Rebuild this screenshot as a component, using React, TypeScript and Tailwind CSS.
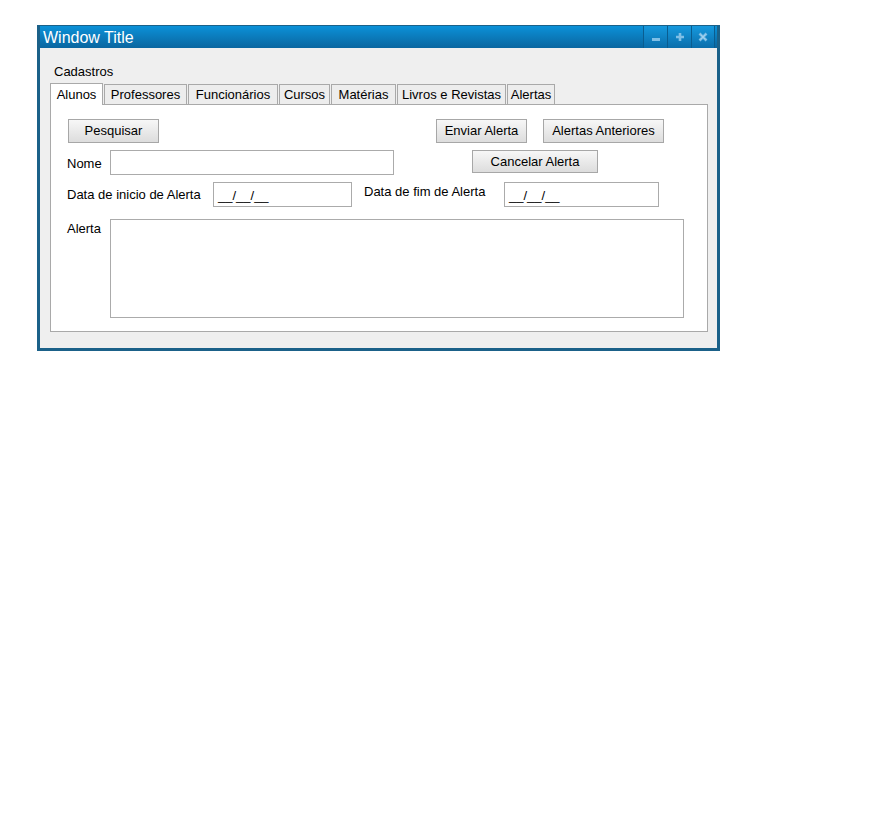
const font = { fontFamily: '"Liberation Sans", Arial, sans-serif' };

const tabs = [
  { label: "Alunos", w: "w-[53px]", active: true },
  { label: "Professores", w: "w-[83px]" },
  { label: "Funcionários", w: "w-[90px]" },
  { label: "Cursos", w: "w-[51px]" },
  { label: "Matérias", w: "w-[65px]" },
  { label: "Livros e Revistas", w: "w-[109px]" },
  { label: "Alertas", w: "w-[48px]" },
];

function Button({ label, className }: { label: string; className: string }) {
  return (
    <button
      className={
        "flex items-center justify-center border border-[#a7a7a7] bg-gradient-to-b from-[#f7f7f7] to-[#dddddd] text-[13px] text-black " +
        className
      }
    >
      {label}
    </button>
  );
}

function TitleButton({ children, last }: { children: React.ReactNode; last?: boolean }) {
  return (
    <div
      className={
        "flex h-full w-[24px] items-center justify-center border-l border-[#0a5d90] bg-gradient-to-b from-[#1699de] to-[#0b6eab] " +
        (last ? "border-r" : "")
      }
    >
      {children}
    </div>
  );
}

export default function App() {
  return (
    <div className="min-h-screen bg-white pt-[25px] pl-[37px]" style={font}>
      <div className="flex w-[683px] flex-col border-x-[3px] border-b-[3px] border-t border-[#1b6189]">
        {/* title bar */}
        <div className="flex h-[22px] items-center bg-gradient-to-b from-[#0b91d8] to-[#0a66a0]">
          <span className="pl-[3px] pt-px text-[16px] leading-[22px] text-white">Window Title</span>
          <div className="flex-1" />
          <div className="mr-[2px] flex h-full">
            <TitleButton>
              <svg width="10" height="10" viewBox="0 0 10 10">
                <rect x="1" y="6" width="8" height="3" fill="#7fbfe6" />
              </svg>
            </TitleButton>
            <TitleButton>
              <svg width="10" height="10" viewBox="0 0 10 10">
                <path d="M3.7 1h2.6v2.7H9v2.6H6.3V9H3.7V6.3H1V3.7h2.7z" fill="#7fbfe6" />
              </svg>
            </TitleButton>
            <TitleButton last>
              <svg width="10" height="10" viewBox="0 0 10 10">
                <path d="M1.5 1.5l7 7M8.5 1.5l-7 7" stroke="#7fbfe6" strokeWidth="2.6" />
                <path d="M2.5 2.5l5 5M7.5 2.5l-5 5" stroke="#a9d4ef" strokeWidth="0.8" />
              </svg>
            </TitleButton>
          </div>
        </div>

        {/* content */}
        <div className="flex flex-col bg-[#efefef] pt-[16px] pb-[16px] pl-[10px] pr-[9px]">
          <div className="pl-[4px] text-[13px] leading-[16px] text-black">Cadastros</div>

          <div className="mt-[3px] flex h-[21px] items-end gap-px">
            {tabs.map((t) =>
              t.active ? (
                <div
                  key={t.label}
                  className={
                    "relative z-10 -mb-px flex h-[22px] items-center justify-center border-x border-t border-[#a9a9a9] bg-white text-[13px] text-black " +
                    t.w
                  }
                >
                  {t.label}
                </div>
              ) : (
                <div
                  key={t.label}
                  className={
                    "flex h-[20px] items-center justify-center border-x border-t border-[#a9a9a9] bg-[#ededed] text-[13px] text-black " +
                    t.w
                  }
                >
                  {t.label}
                </div>
              )
            )}
          </div>

          {/* panel */}
          <div className="flex h-[228px] flex-col border border-[#a9a9a9] bg-white pt-[14px] pl-[16px] text-[13px] text-black">
            <div className="flex h-[24px]">
              <Button label="Pesquisar" className="ml-px h-[24px] w-[91px]" />
              <Button label="Enviar Alerta" className="ml-[277px] h-[24px] w-[91px]" />
              <Button label="Alertas Anteriores" className="ml-[16px] h-[24px] w-[121px]" />
            </div>

            <div className="mt-[7px] flex items-start">
              <span className="mt-[6px] w-[43px] leading-[16px]">Nome</span>
              <div className="h-[25px] w-[284px] border border-[#ababab] bg-white" />
              <Button label="Cancelar Alerta" className="ml-[78px] h-[23px] w-[126px]" />
            </div>

            <div className="mt-[7px] flex items-start">
              <span className="mt-[5px] w-[146px] leading-[16px]">Data de inicio de Alerta</span>
              <div className="flex h-[25px] w-[139px] items-center border border-[#ababab] bg-white pl-[4px] pt-[2px]">
                __/__/__
              </div>
              <span className="mt-[2px] ml-[12px] w-[140px] leading-[16px]">Data de fim de Alerta</span>
              <div className="flex h-[25px] w-[155px] items-center border border-[#ababab] bg-white pl-[4px] pt-[2px]">
                __/__/__
              </div>
            </div>

            <div className="mt-[12px] flex items-start">
              <span className="mt-[2px] w-[43px] leading-[16px]">Alerta</span>
              <div className="h-[99px] w-[574px] border border-[#ababab] bg-white" />
            </div>
          </div>
        </div>
      </div>
    </div>
  );
}
